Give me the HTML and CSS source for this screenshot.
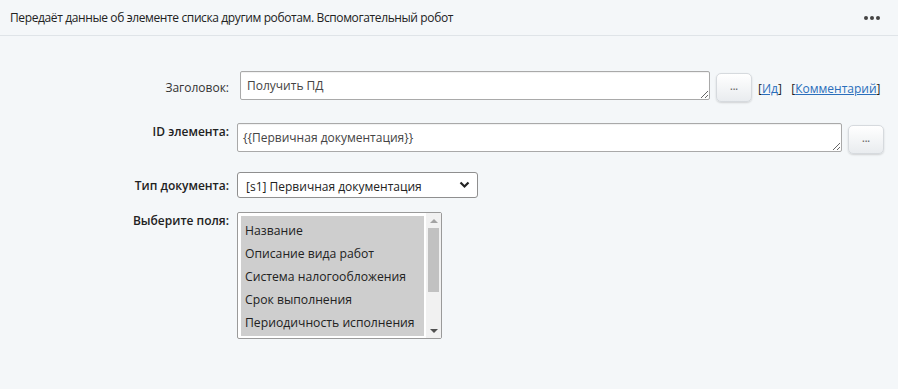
FILE: index.html
```html
<!DOCTYPE html>
<html lang="ru">
<head>
<meta charset="utf-8">
<link rel="stylesheet" href="styles.css">
</head>
<body>
<div class="panel">
  <div class="header">
    <div class="title">Передаёт данные об элементе списка другим роботам. Вспомогательный робот</div>
    <div class="menu"><span></span><span></span><span></span></div>
  </div>
  <div class="form">
    <div class="row row-title">
      <div class="label normal">Заголовок:</div>
      <div class="field">
        <textarea class="ta ta-title">Получить ПД</textarea>
        <button class="btn">...</button>
        <div class="links">[<a href="#">Ид</a>]&nbsp;&nbsp; [<a href="#">Комментарий</a>]</div>
      </div>
    </div>
    <div class="row row-id">
      <div class="label">ID элемента:</div>
      <div class="field">
        <textarea class="ta ta-id">{{Первичная документация}}</textarea>
        <button class="btn">...</button>
      </div>
    </div>
    <div class="row row-type">
      <div class="label">Тип документа:</div>
      <div class="field">
        <div class="select">
          <span class="select-text">[s1] Первичная документация</span>
          <svg class="chev" width="11" height="8" viewBox="0 0 11 8"><path d="M1.5 1.5 L5.5 5.5 L9.5 1.5" fill="none" stroke="#222" stroke-width="2.2"/></svg>
        </div>
      </div>
    </div>
    <div class="row row-fields">
      <div class="label">Выберите поля:</div>
      <div class="field">
        <div class="listbox">
          <div class="options">
            <div class="opt">Название</div>
            <div class="opt">Описание вида работ</div>
            <div class="opt">Система налогообложения</div>
            <div class="opt">Срок выполнения</div>
            <div class="opt">Периодичность исполнения</div>
          </div>
          <div class="scrollbar">
            <div class="arrow up"></div>
            <div class="track"><div class="thumb"></div></div>
            <div class="arrow down"></div>
          </div>
        </div>
      </div>
    </div>
  </div>
</div>
</body>
</html>
```

FILE: styles.css
```css
html, body {
  margin: 0;
  padding: 0;
  background: #f4f7f9;
}
body {
  font-family: "Open Sans", "Noto Sans", sans-serif;
  color: #222;
  width: 898px;
  height: 389px;
  overflow: hidden;
}
.header {
  height: 35px;
  border-bottom: 1px solid #dfe4e8;
  display: flex;
  align-items: center;
  justify-content: space-between;
  padding: 0 18px 0 10px;
}
.title {
  font-size: 12px;
  color: #222;
  letter-spacing: -0.38px;
}
.menu {
  display: flex;
  gap: 2px;
}
.menu span {
  width: 4px;
  height: 4px;
  border-radius: 50%;
  background: #444;
}
.form {
  padding-top: 35px;
  display: flex;
  flex-direction: column;
}
.row {
  display: grid;
  grid-template-columns: 229px 1fr;
  column-gap: 8px;
}
.label {
  text-align: right;
  font-size: 12px;
  font-weight: 600;
  color: #222;
}
.label.normal {
  font-weight: 400;
  color: #333;
}
.field {
  display: flex;
  align-items: flex-start;
}
.ta {
  box-sizing: border-box;
  height: 29px;
  border: 1px solid #a9a9a9;
  border-radius: 2px;
  background: #fff;
  font-family: "Open Sans", sans-serif;
  font-size: 12px;
  color: #444;
  padding: 5px 6px;
  margin: 0;
  resize: both;
  overflow: hidden;
  box-shadow: inset 0 1px 1px rgba(0,0,0,0.06);
}
.ta-title {
  width: 470px;
  margin-left: 3px;
}
.ta-id {
  width: 605px;
  padding-left: 5px;
}
.btn {
  box-sizing: border-box;
  width: 36px;
  height: 29px;
  margin: 2px 0 0 6px;
  border: 1px solid #d6dade;
  border-radius: 5px;
  background: linear-gradient(#ffffff, #e9ecef);
  box-shadow: 0 1px 2px rgba(0,0,0,0.15);
  font-size: 10px;
  font-weight: 600;
  color: #666;
  padding: 0 0 3px;
  font-family: "Open Sans", sans-serif;
}
.links {
  font-size: 12px;
  color: #222;
  margin: 9px 0 0 6px;
  white-space: nowrap;
}
.links a {
  color: #2a6ebb;
  text-decoration: underline;
}
.row-title .label {
  padding-top: 8px;
}
.row-id {
  margin-top: 21px;
}
.row-type {
  margin-top: 18px;
}
.row-type .label {
  padding-top: 5px;
}
.select {
  box-sizing: border-box;
  width: 241px;
  height: 26px;
  border: 1px solid #8f8f8f;
  border-radius: 3px;
  background: #fff;
  display: flex;
  align-items: center;
  justify-content: space-between;
  padding: 0 7px 0 8px;
  font-size: 12px;
  color: #222;
}
.select-text {
  padding-top: 3px;
}
.row-fields {
  margin-top: 14px;
}
.listbox {
  box-sizing: border-box;
  width: 205px;
  height: 127px;
  border: 1px solid #9a9a9a;
  border-radius: 2px;
  background: #fff;
  display: flex;
  padding: 3px 0 2px 3px;
}
.options {
  flex: 1;
  background: #cecece;
  overflow: hidden;
  padding-top: 3px;
}
.opt {
  font-size: 12.2px;
  color: #222;
  height: 23px;
  line-height: 23px;
  padding-left: 4px;
  white-space: nowrap;
}
.scrollbar {
  width: 15px;
  background: #f1f1f1;
  display: flex;
  flex-direction: column;
  margin: -3px 0 -2px 2px;
}
.arrow {
  height: 15px;
  display: flex;
  align-items: center;
  justify-content: center;
}
.arrow::before {
  content: "";
  border-left: 4px solid transparent;
  border-right: 4px solid transparent;
}
.arrow.up::before {
  border-bottom: 4px solid #a3a3a3;
}
.arrow.down::before {
  border-top: 4px solid #505050;
}
.track {
  flex: 1;
  padding: 0 2px;
}
.thumb {
  height: 64px;
  background: #c1c1c1;
}
```
